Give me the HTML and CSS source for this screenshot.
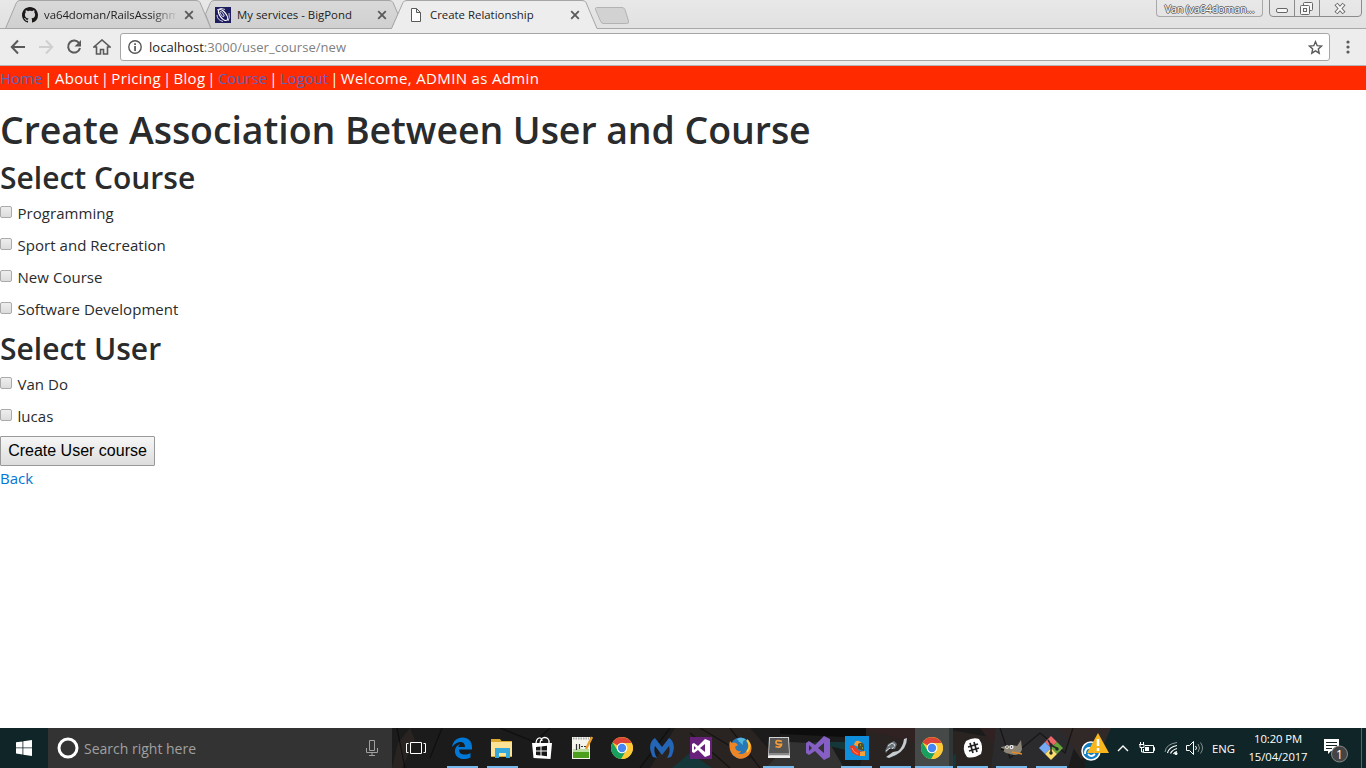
FILE: index.html
```html
<!DOCTYPE html>
<html lang="en">
<head>
<meta charset="utf-8">
<title>Create Relationship</title>
<link rel="stylesheet" href="styles.css">
</head>
<body>
<svg width="0" height="0" class="defs">
  <defs>
    <symbol id="chrome" viewBox="0 0 24 24">
      <circle cx="12" cy="12" r="11" fill="#fbc936"/>
      <path d="M12 12 2.500 6.400A11 11 0 0 1 21.600 7H12z" fill="#dc4437"/>
      <path d="M2.500 6.400A11 11 0 0 0 11.200 23L16 15l-8 0z" fill="#18a05e"/>
      <path d="M12 7h9.600A11 11 0 0 1 11.200 23L16.300 14.500z" fill="#fbc936"/>
      <circle cx="12" cy="12" r="5.300" fill="#fff"/><circle cx="12" cy="12" r="4.200" fill="#4687f4"/>
    </symbol>
    <symbol id="x" viewBox="0 0 10 10"><path d="M1.200 1.200l7.600 7.600M8.800 1.200l-7.600 7.600" stroke="#5a5a5a" stroke-width="1.800" fill="none"/></symbol>
    <linearGradient id="tabfill" x1="0" y1="0" x2="0" y2="1"><stop offset="0" stop-color="#d9d9d9"/><stop offset="1" stop-color="#d0d0d0"/></linearGradient>
  </defs>
</svg>
<div class="screen">
  <header class="tabstrip">
    <svg class="tab-shapes" width="640" height="29" viewBox="0 0 640 29">
      <path d="M0 28.500H640" stroke="#a9a9a9"/>
      <path d="M5.500 28.500 16.500 2.500Q17.500.5 20 .5H196Q199 .5 200 2.500L211 28.500z" fill="url(#tabfill)" stroke="#a5a5a5"/>
      <path d="M211 28.500 205.500 14 210.500 2.500Q211.500.5 214 .5H389Q392 .5 393 2.500L398 14 392 28.500z" fill="url(#tabfill)" stroke="#a5a5a5"/>
      <path d="M391.500 29 403 2.500Q404 .5 407 .5H582Q585 .5 586 2.500L597 28.500V29z" fill="#ededed"/>
      <path d="M391.500 28.500 403 2.500Q404 .5 407 .5H582Q585 .5 586 2.500L597 28.500" fill="none" stroke="#a5a5a5"/>
      <path d="M596.500 7.500H622Q624 7.500 625 9.500L628.500 21Q629 24 626.500 23.500H604Q601.500 24 600.500 21L595.500 9.500Q595 7.500 596.500 7.500z" fill="#d2d2d2" stroke="#b3b3b3"/>
    </svg>
    <div class="tab tab-one">
      <svg width="16" height="16" viewBox="0 0 16 16"><path fill="#1b1817" d="M8 0C3.580 0 0 3.580 0 8c0 3.540 2.290 6.530 5.470 7.590.4.070.55-.17.55-.38 0-.19-.01-.82-.01-1.490-2.010.37-2.530-.49-2.690-.94-.09-.23-.48-.94-.82-1.130-.28-.15-.68-.52-.01-.53.63-.01 1.080.58 1.230.82.72 1.210 1.870.87 2.330.66.070-.52.28-.87.51-1.070-1.780-.2-3.640-.89-3.640-3.950 0-.87.31-1.590.82-2.150-.08-.2-.36-1.020.08-2.120 0 0 .67-.21 2.200.82.64-.18 1.320-.27 2-.27s1.360.09 2 .27c1.530-1.040 2.200-.82 2.200-.82.44 1.100.16 1.920.08 2.120.51.560.82 1.270.82 2.150 0 3.070-1.870 3.750-3.650 3.950.29.25.54.73.54 1.480 0 1.070-.01 1.930-.01 2.200 0 .21.15.46.55.38A8 8 0 0 0 16 8c0-4.420-3.580-8-8-8z"/></svg>
      <span class="tab-title faded">va64doman/RailsAssignm</span>
      <svg class="close" width="10" height="10"><use href="#x"/></svg>
    </div>
    <div class="tab tab-two">
      <svg width="16" height="16" viewBox="0 0 16 16"><path fill="#1e1d60" d="M0 0h16v16H0z"/><g fill="none" stroke="#fff"><ellipse cx="8" cy="8" rx="3" ry="6.500" transform="rotate(-38 8 8)" stroke-width="1.200"/><path d="M2 3q4-3 8-.5M2 8q0 5 6 6.500M14 6q1 5-1 8" stroke-width=".8"/><ellipse cx="7" cy="7" rx="1.200" ry="3" transform="rotate(-38 7 7)" stroke-width=".8"/></g></svg>
      <span class="tab-title">My services - BigPond</span>
      <svg class="close" width="10" height="10"><use href="#x"/></svg>
    </div>
    <div class="tab tab-three">
      <svg width="12" height="16" viewBox="0 0 12 16"><path d="M1.500 1.500h5l4 4v9h-9zM6.500 1.500v4h4" fill="#fff" stroke="#5a5a5a"/></svg>
      <span class="tab-title">Create Relationship</span>
      <svg class="close" width="10" height="10"><use href="#x"/></svg>
    </div>
    <div class="profile">Van (va64doman...</div>
    <svg class="window-buttons" width="94" height="18" viewBox="0 0 94 18">
      <path d="M.5 0v13q0 3.500 3.500 3.500h85q3.500 0 3.500-3.500V0M25.500 0v16M50.500 0v16" fill="none" stroke="#8b8b8b"/>
      <g fill="#f7f7f7" stroke="#666"><rect x="7.500" y="8.500" width="11" height="4" rx="1.500"/><rect x="34.500" y="2.500" width="9" height="8" rx="1"/><rect x="31.500" y="5.500" width="9" height="9" rx="1"/><rect x="34.500" y="8.500" width="3" height="3"/></g>
      <path d="M67 4l8 9M75 4l-8 9" stroke="#666" stroke-width="4"/><path d="M67.500 4.500l7 8M74.500 4.500l-7 8" stroke="#f7f7f7" stroke-width="2"/>
    </svg>
  </header>

  <div class="toolbar">
    <div class="tools">
      <svg width="16" height="16" viewBox="0 0 16 16"><path d="M15 8H2M8 1.500 1.800 8 8 14.500" fill="none" stroke="#5a5a5a" stroke-width="2"/></svg>
      <svg width="16" height="16" viewBox="0 0 16 16"><path d="M1 8h13M8 1.500 14.200 8 8 14.500" fill="none" stroke="#cfcfcf" stroke-width="2"/></svg>
      <svg width="16" height="16" viewBox="0 0 16 16"><path d="M13.200 4.300A6 6 0 1 0 14 9" fill="none" stroke="#5a5a5a" stroke-width="2"/><path d="M15 1v6.500H8.500z" fill="#5a5a5a"/></svg>
      <svg width="18" height="16" viewBox="0 0 18 16"><path d="M3.500 8v7h4v-4.500h3V15h4V8H17L9 1 1 8z" fill="none" stroke="#5a5a5a" stroke-width="1.600"/></svg>
    </div>
    <div class="address">
      <svg width="14" height="14" viewBox="0 0 14 14"><circle cx="7" cy="7" r="6.200" fill="none" stroke="#555" stroke-width="1.400"/><path d="M6.200 3.200h1.700v1.700H6.200zm0 2.700h1.700v5H6.200z" fill="#555"/></svg>
      <span class="url">localhost<span class="path">:3000/user_course/new</span></span>
      <svg class="star" width="15" height="15" viewBox="0 0 15 15"><path d="M7.500 1.700 9.200 5.700l4.300.4-3.200 2.900.9 4.200-3.700-2.300-3.700 2.300.9-4.200L1.500 6.100l4.300-.4z" fill="none" stroke="#5a5a5a" stroke-width="1.400"/></svg>
    </div>
    <svg class="menu" width="4" height="14" viewBox="0 0 4 14"><g fill="#5a5a5a"><circle cx="2" cy="2" r="1.600"/><circle cx="2" cy="7" r="1.600"/><circle cx="2" cy="12" r="1.600"/></g></svg>
  </div>

  <nav class="site-nav"><a>Home</a> <i>|</i> About <i>|</i> Pricing <i>|</i> Blog <i>|</i> <a>Course</a> <i>|</i> <a>Logout</a> <i>|</i> Welcome, ADMIN as Admin</nav>

  <main class="page">
    <h1>Create Association Between User and Course</h1>
    <h2>Select Course</h2>
    <label class="option"><span class="box"></span>Programming</label>
    <label class="option"><span class="box"></span>Sport and Recreation</label>
    <label class="option"><span class="box"></span>New Course</label>
    <label class="option"><span class="box"></span>Software Development</label>
    <h2 class="users">Select User</h2>
    <label class="option"><span class="box"></span>Van Do</label>
    <label class="option last"><span class="box"></span>lucas</label>
    <button class="submit">Create User course</button>
    <a class="back">Back</a>
  </main>

  <footer class="taskbar">
    <svg class="wallpaper" width="974" height="40" viewBox="392 0 974 40">
      <path fill="#1b1b1b" d="M392 0h974v40H392z"/>
      <path fill="#292422" d="M392 40l6-25 12-15 5 12-13 28zM650 40l25-40h75l35 40zM865 0h75l55 10 10 30H860z"/>
      <path fill="#302123" d="M860 0h65v18zM980 0l18 24 15-24z"/>
      <path fill="#333" d="M790 14l40 2 14 24h-78z"/>
      <path fill="#0d0d0d" d="M780 0h86v10l-86-4z"/>
      <path fill="#14383a" d="M672 40l18-15 22 15zM812 14h34v8zM928 40l28-14v14z"/>
      <path fill="#2b2b2d" d="M996 0h84l-12 40h-77z"/>
      <path fill="#102527" d="M1085 0h281v40H1085z"/>
      <path fill="#312927" d="M1060 0h51l-10 23-20 8z"/>
      <path d="M397 0l8 40M430 30l12-30M500 0l35 14 15-14M640 40l30-40M690 5l40 35M700 0l50 30M730 0l30 40M1000 0l10 30 30-25 25 20 8-25" fill="none" stroke="#090909" stroke-opacity=".6" stroke-width="1.300"/>
      <path d="M1361.500 0v40" stroke="#53676a"/>
    </svg>
    <div class="start"><svg width="16" height="16" viewBox="0 0 16 16"><path fill="#fff" d="M0 2.300 6.500 1.400V7.500H0zM7.300 1.300 16 0v7.500H7.300zM0 8.300h6.500v6.200L0 13.600zM7.300 8.300H16V16l-8.700-1.300z"/></svg></div>
    <div class="search">
      <svg width="22" height="22" viewBox="0 0 22 22"><circle cx="11" cy="11" r="9" fill="none" stroke="#fff" stroke-width="3"/></svg>
      <span class="search-text">Search right here</span>
      <svg width="12" height="16" viewBox="0 0 12 16"><path d="M3.500.5h5v10h-5zM.5 8v4.500h11V8M6 12.500V16M3 15.500h6" fill="none" stroke="#a0a0a0"/></svg>
    </div>
    <div class="view"><svg width="20" height="14" viewBox="0 0 20 14"><path d="M4.500 1.500h11v11h-11zM2.500 2.500h-2v9h2M17.500 2.500h2v9h-2" fill="none" stroke="#fff"/></svg></div>
    <div class="apps">
      <div class="app open"><svg viewBox="0 0 24 24"><path fill="#0078d7" d="M2 11C3 5 7 1.500 12.500 1.500 19 1.500 22 6 22 11v2.500H9c0 6 7 6 11.500 3.500v4.500C12 25.500 4 21.500 5 14c.4-3 2.500-5 5-6-1 1-1.500 2-1.700 3H15C15 4 7 5 2 11z"/></svg></div>
      <div class="app open"><svg viewBox="0 0 24 24"><path fill="#dba930" d="M1 3h9l1.500 2H22v16H1z"/><path fill="#fce294" d="M1 6h21v14H1z"/><path fill="#35a9dc" d="M5 12h15v10h-4v-5H9v5H5z"/></svg></div>
      <div class="app"><svg viewBox="0 0 24 24"><path d="M6 8c0-7 6-8 6-3M10 8c0-9 10-8 9-1" fill="none" stroke="#fff" stroke-width="1.300"/><path fill="#fff" d="M2 7h20l-1.500 16-17-1z"/><path fill="#171717" d="M6 11l4.500-.5v4H6zm5.500-.6 5.500-.7v4.800h-5.500zM6 15.500h4.500v4L6 19zm5.500 0H17v4.700l-5.500-.6z"/></svg></div>
      <div class="app"><svg viewBox="0 0 24 24"><path fill="#f4f4ed" d="M2 1h18v22H2z"/><path fill="#b9dfa0" d="M3 13h16v3H3z"/><path fill="#4c9e1d" d="M3 16h16v6H3z"/><path d="M3 2.500h16" stroke="#aaa" stroke-width="2" stroke-dasharray="1.500 1"/><path d="M6.500 8v6M9.500 8v5M11 10.500h2m1 0h2" fill="none" stroke="#333" stroke-width="1.200"/><path d="M22 1l-6 12" stroke="#eb9d2c" stroke-width="2.500"/></svg></div>
      <div class="app"><svg><use href="#chrome"/></svg></div>
      <div class="app"><svg viewBox="0 0 24 24"><path fill="#2465b5" d="M3 21C-2 12 0 5 5 2l7 9 7-9c5 3 7 10 2 19l-4 1c3-5 3-8 2-12l-7 9-7-9c-1 4-1 7 2 12z"/></svg></div>
      <div class="app"><svg viewBox="0 0 24 24"><path fill="#68217a" d="M1 1h22v22H1z"/><path fill="#fff" fill-rule="evenodd" d="M16 3l5 2v14l-5 2-7-7-4 3-2-1V8l2-1 4 3zM5 10v4l2-2zm6 2 5 4V8z"/></svg></div>
      <div class="app"><svg viewBox="0 0 24 24"><circle cx="12.500" cy="12" r="10.500" fill="#2878b8"/><path d="M9 3q5-3 9 1-4 0-3 5-4-3-6-6z" fill="#53b7df"/><path fill="#ed8426" d="M2 5l2 2q2-1 4 0l2 2-3 2q1 5 6 4-1 3-4 2 7 3 10-3 3-5 0-11 8 8 2 16-9 8-17-1-4-6-2-13z"/><path d="M19 4q5 6 0 12" stroke="#ffc529" stroke-width="2" fill="none"/></svg></div>
      <div class="app open"><svg viewBox="0 0 24 24"><path fill="#d2d2d2" d="M2 1h20l1 20H1z"/><path fill="#555" d="M3 2h18l1 15H2z"/><path fill="#888" d="M2 17h20v2H2z"/><path fill="#eee" d="M1 20h22v2H1z"/><path d="M15 5.500q-6-2-6 .8t5.500 2q0 4-6 2.200" fill="none" stroke="#f09b3e" stroke-width="1.800"/></svg></div>
      <div class="app"><svg viewBox="0 0 24 24"><path fill="#865fc5" fill-rule="evenodd" d="M18 0l6 3v18l-6 3-9-9-6 4-3-2V7l3-2 6 4zM3 9v6l3-3zm9 3 6 5V7z"/></svg></div>
      <div class="app open"><svg viewBox="0 0 24 24"><path fill="#0e8edb" d="M0 0h24v24H0z"/><path fill="#f3a23a" d="M9 9q1-5 5-4l3 2-3 4z"/><path fill="#5f4b24" d="M13 8q4-3 6 1v6l-6-2z"/><path fill="#ef3a1c" d="M5 10q4-2 6 2 4 5 8 3 0 4-4 5-10-1-10-10z"/><path fill="#f3a23a" d="M15 16l5-1v5h-5z"/><path d="M7 12q1 4 6 6" stroke="#ff8d68" fill="none"/><path d="M15 9h1m1 3h1" stroke="#8bb04a" stroke-width="1.500"/></svg></div>
      <div class="app open"><svg viewBox="0 0 24 24"><path fill="#c6cbd0" d="M23 2q0 11-11 17L5 22l-3-1 7-5 5-1q5-4 6-12z"/><path fill="#697279" d="M1 15 4 8l6-3 3 3-2 5-6 0-3 4z"/><path d="M4 10l4-3 3 2-3 4M2 15l4-3" stroke="#d8dcdf" fill="none"/><path d="M9 10l1 1" stroke="#d45232"/></svg></div>
      <div class="app open active"><svg><use href="#chrome"/></svg></div>
      <div class="app open"><svg viewBox="0 0 24 24"><path d="M5 5q7-4 13-2 5 7 2 15-8 5-14 3-6-8-1-16z" fill="#fff"/><path d="M9 7l3 10M13 6l3 10M7 11l10-3M8 15l10-3" stroke="#222" stroke-width="1.700"/></svg></div>
      <div class="app open"><svg viewBox="0 0 24 24"><path fill="#8c8575" d="M1 11l5-1 6-1 5 1 4-6 1 9q-1 6-8 6l-8-2-4-3z"/><circle cx="7" cy="11" r="1.800" fill="#fff"/><circle cx="11.500" cy="11" r="2" fill="#fff"/><circle cx="7" cy="11" r=".8"/><circle cx="11.500" cy="11" r=".8"/><path d="M1 13l3 1" stroke="#111" stroke-width="2"/><path d="M12 16l10 2" stroke="#e48a24" stroke-width="1.600"/></svg></div>
      <div class="app open"><svg viewBox="0 0 24 24"><path fill="#ed6769" d="M12 0l6 6-6 6-6-6z"/><path fill="#76a9f4" d="M6 6l6 6-6 6-6-6z"/><path fill="#67a53a" d="M18 6l6 6-6 6-6-6z"/><path fill="#fbdc6e" d="M12 12l6 6-6 6-6-6z"/><path d="M9 4l3 5v9M12 9l7 4" fill="none" stroke="#262626" stroke-width="1.500"/><g fill="#262626"><circle cx="12" cy="9" r="1.700"/><circle cx="12" cy="17" r="1.700"/><circle cx="18" cy="13" r="1.700"/></g></svg></div>
    </div>
    <div class="tray">
      <svg class="alert" width="29" height="30" viewBox="0 0 29 30"><circle cx="10" cy="18" r="9" fill="#137fc2" stroke="#fff" stroke-width="1.500"/><path d="M4 21q0-7 6-6M7 21q3 4 7 0" stroke="#fff" stroke-width="1.800" fill="none"/><path fill="#f8b51c" d="M17 0l11 20H6z"/><path d="M17 6v7M17 15v3" stroke="#fff" stroke-width="2.500"/></svg>
      <svg class="chevron" width="12" height="8" viewBox="0 0 12 8"><path d="M1 7l5-5 5 5" fill="none" stroke="#fff" stroke-width="1.400"/></svg>
      <svg class="battery" width="17" height="14" viewBox="0 0 17 14"><path d="M7 4.500h8.500v7h-10V8M15.500 6.500h1v3h-1M1 3.500h5v3H2v-3M2.500 1v2M5.500 1v2M3.500 7v4h2" fill="none" stroke="#fff"/><path fill="#fff" d="M7 6h4v4H7z"/></svg>
      <svg class="wifi" width="14" height="14" viewBox="0 0 14 14"><g fill="none" stroke="#fff"><path d="M1 11Q2 3 13 1.500" stroke="#8c9898"/><path d="M3.500 12Q5 6 13 4.500M6.500 12.500Q8 9 13 7.500M9.500 13q1-2 3.500-2.500" stroke-width="1.200"/></g><circle cx="12" cy="12.500" r="1.500" fill="#fff"/></svg>
      <svg class="sound" width="17" height="14" viewBox="0 0 17 14"><path d="M.5 4.500h3l4-4v13l-4-4h-3z" fill="none" stroke="#fff"/><path d="M9.500 5q2 2 0 4" fill="none" stroke="#fff"/><path d="M12 3q3 4 0 8M14.500 1.500q4 5.500 0 11" fill="none" stroke="#839091"/></svg>
      <span class="lang">ENG</span>
      <div class="clock"><span class="time">10:20 PM</span><span class="date">15/04/2017</span></div>
      <svg class="notice" width="26" height="26" viewBox="0 0 26 26"><path fill="#fff" d="M1 2h15v12H8l-3 3v-3H1z"/><path d="M3 5.500h11M3 8.500h11M3 11.500h6" stroke="#102527"/><circle cx="16.500" cy="17" r="8" fill="#444" stroke="#888"/><text x="13" y="21.500" class="badge">1</text></svg>
    </div>
  </footer>
</div>
</body>
</html>
```
FILE: styles.css
```css
* { box-sizing: border-box; }
body { margin: 0; font-family: "Open Sans", "Noto Sans", sans-serif; color: #292b2c; background: #fff; }
svg { display: block; flex: none; }
.defs { position: absolute; }
.screen { width: 1366px; height: 768px; display: flex; flex-direction: column; overflow: hidden; }

.tabstrip { position: relative; height: 29px; display: flex; align-items: flex-start; background: linear-gradient(#e8e8e8, #e1e1e1); border-bottom: 1px solid #a9a9a9; }
.tab-shapes { position: absolute; left: 0; top: 0; }
.tab { position: relative; display: flex; align-items: center; height: 29px; font-size: 11.4px; color: #222; white-space: nowrap; }
.tab-one { margin-left: 22px; width: 193px; gap: 6px; }
.tab-two { width: 195px; gap: 6px; }
.tab-three { width: 190px; gap: 8px; }
.tab-title { flex: 1; line-height: 20px; }
.tab-one .tab-title { flex: none; width: 132px; letter-spacing: -.05px; }
.tab-one .close { margin-left: 2px; }
.tab-two .close { margin-right: 23px; }
.tab-three .close { margin-right: 20px; }
.faded { -webkit-mask-image: linear-gradient(90deg, #000 108px, transparent 134px); }
.profile { margin-left: auto; width: 107px; height: 17px; border: 1px solid #a8a8a8; border-top: 0; border-radius: 0 0 4px 4px; font-size: 10.8px; line-height: 18px; text-align: center; color: #fff; text-shadow: 1px 0 #666, -1px 0 #666, 0 1px #666, 0 -1px #666; white-space: nowrap; letter-spacing: -.2px; }
.window-buttons { margin: 0 3px 0 6px; }

.toolbar { height: 37px; display: flex; align-items: center; background: #ededed; border-bottom: 1px solid #b6b4b4; }
.tools { display: flex; width: 120px; padding-left: 10px; gap: 12px; }
.tools svg:last-child { margin-left: -1px; }
.address { width: 1210px; height: 28px; display: flex; align-items: center; gap: 7px; padding: 0 6px 0 7px; border: 1px solid #a6a6a6; border-radius: 3px; background: #fff; }
.url { flex: 1; font-size: 13px; line-height: 20px; color: #222; letter-spacing: .04px; }
.path { color: #808080; }
.menu { margin-left: 16px; }

.site-nav { height: 24px; background: #ff2a00; color: #fff; font-size: 15px; line-height: 25px; letter-spacing: .34px; white-space: nowrap; }
.site-nav a { color: #6263ba; letter-spacing: 0; }
.site-nav i { font-style: normal; margin: 0 -2.300px; }

.page { height: 638px; display: flex; flex-direction: column; align-items: flex-start; }
h1, h2 { margin: 0; font-weight: 600; white-space: nowrap; }
h1 { margin-top: 18px; font-size: 37.5px; line-height: 44px; letter-spacing: -.07px; }
h2 { margin: 8px 0; font-size: 30px; line-height: 35px; }
.page .users { margin-top: 0; }
.option { display: flex; height: 24px; margin-bottom: 8px; gap: 5.500px; font-size: 15px; line-height: 21px; letter-spacing: .04px; white-space: nowrap; }
.page .last { margin-bottom: 6px; }
.box { width: 12px; height: 12px; margin-top: 3px; border: 1px solid #aaa; border-radius: 2px; background: linear-gradient(#eee, #dcdcdc); }
.submit { width: 155px; height: 30px; margin: 0; padding: 0; border: 1px solid #999; border-radius: 1px; background: linear-gradient(#f6f6f6, #ddd); font: 16px/26px "Liberation Sans", Arial, sans-serif; color: #000; white-space: nowrap; }
.back { font-size: 15px; line-height: 24px; color: #0275d8; }

.taskbar { position: relative; height: 40px; display: flex; background: #1b1b1b; color: #fff; }
.wallpaper { position: absolute; left: 392px; top: 0; }
.start { width: 48px; padding: 12px 16px; background: #102527; }
.search { width: 344px; display: flex; align-items: center; padding: 0 14px 0 9px; gap: 5px; background: #333; }
.search-text { flex: 1; font-size: 14px; color: #a0a0a0; }
.view, .apps, .tray { position: relative; display: flex; align-items: center; }
.view { width: 50px; padding-left: 14px; }
.apps { width: 629px; align-items: stretch; }
.app { flex: none; width: 39px; height: 40px; display: flex; flex-direction: column; align-items: center; padding-top: 8px; }
.app:nth-child(-n+5) { width: 40px; }
.app svg { width: 24px; height: 24px; }
.open::after { content: ""; width: 31px; height: 2px; margin-top: 6px; background: #76b9ed; }
.active { width: 38px; background: linear-gradient(90deg, #454948 34px, #303635 34px); }
.active svg { margin-left: -4px; }
.active::after { width: 38px; }
.active ~ .app { width: 39.300px; }
.tray { flex: 1; }
.alert { margin-left: 10px; }
.chevron { margin-left: 7px; }
.battery { margin-left: 9px; }
.wifi { margin-left: 9px; }
.sound { margin-left: 8px; }
.lang { margin-left: 9px; width: 24px; font-size: 11.3px; }
.clock { margin-left: 12px; width: 60px; text-align: center; font-size: 11.3px; line-height: 18px; letter-spacing: -.1px; display: flex; flex-direction: column; white-space: nowrap; }
.notice { margin: 4px 0 0 15px; }
.badge { font-size: 12px; fill: #fff; }
```
